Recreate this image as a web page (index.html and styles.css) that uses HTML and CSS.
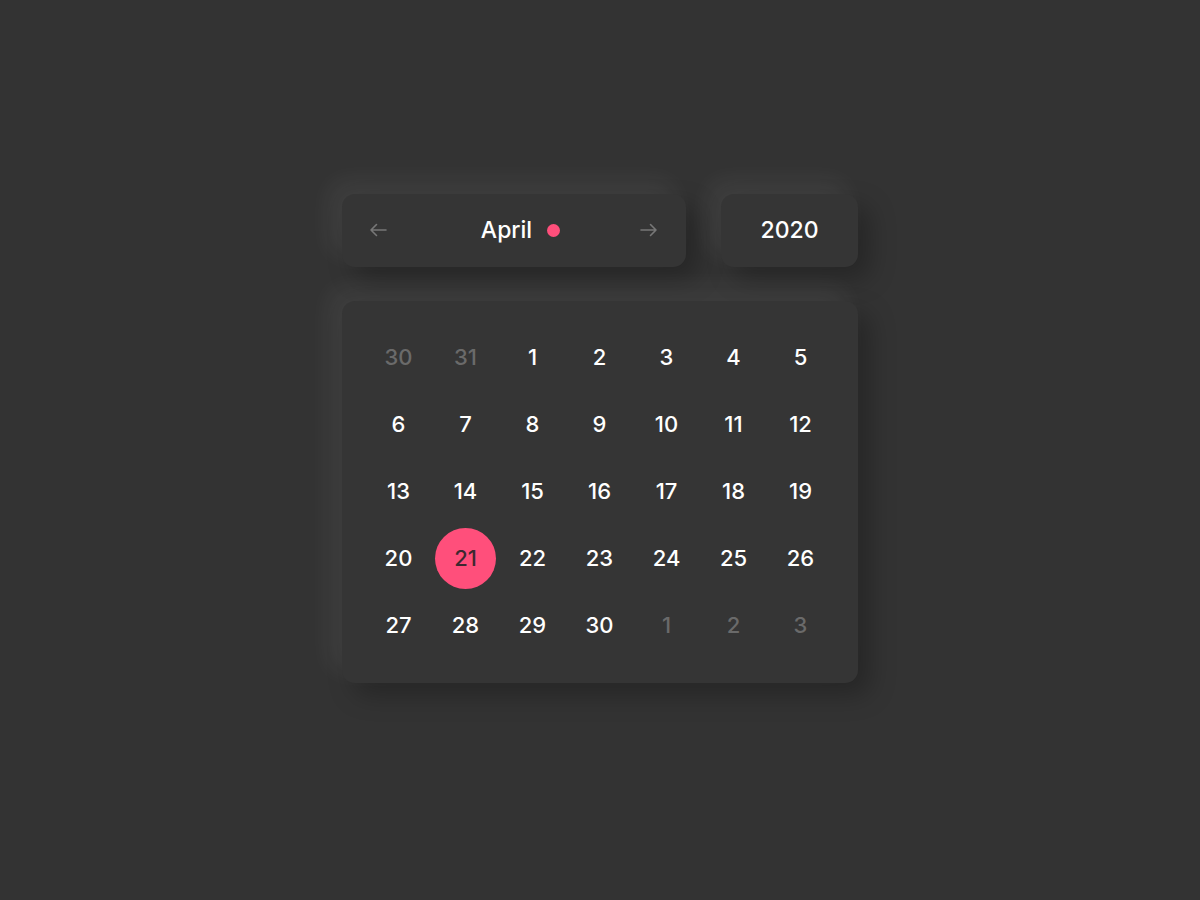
FILE: index.html
```html
<!DOCTYPE html>
<html lang="en">
<head>
<meta charset="utf-8">
<title>Calendar</title>
<link rel="stylesheet" href="styles.css">
</head>
<body>
<div class="picker">
  <div class="top">
    <div class="card month">
      <button class="arrow" aria-label="Previous month">
        <svg width="20" height="14" viewBox="0 0 20 14"><path d="M18 7H3M8.5 1.5L3 7l5.5 5.5" fill="none" stroke="currentColor" stroke-width="1.6" stroke-linecap="round" stroke-linejoin="round"/></svg>
      </button>
      <div class="title"><span>April</span><span class="dot"></span></div>
      <button class="arrow" aria-label="Next month">
        <svg width="20" height="14" viewBox="0 0 20 14"><path d="M2 7h15M11.5 1.5L17 7l-5.5 5.5" fill="none" stroke="currentColor" stroke-width="1.6" stroke-linecap="round" stroke-linejoin="round"/></svg>
      </button>
    </div>
    <div class="card year">2020</div>
  </div>
  <div class="card days">
    <span class="day muted">30</span><span class="day muted">31</span><span class="day">1</span><span class="day">2</span><span class="day">3</span><span class="day">4</span><span class="day">5</span>
    <span class="day">6</span><span class="day">7</span><span class="day">8</span><span class="day">9</span><span class="day">10</span><span class="day">11</span><span class="day">12</span>
    <span class="day">13</span><span class="day">14</span><span class="day">15</span><span class="day">16</span><span class="day">17</span><span class="day">18</span><span class="day">19</span>
    <span class="day">20</span><span class="day selected"><span class="ring">21</span></span><span class="day">22</span><span class="day">23</span><span class="day">24</span><span class="day">25</span><span class="day">26</span>
    <span class="day">27</span><span class="day">28</span><span class="day">29</span><span class="day">30</span><span class="day muted">1</span><span class="day muted">2</span><span class="day muted">3</span>
  </div>
</div>
</body>
</html>
```

FILE: styles.css
```css
html, body {
  margin: 0;
  padding: 0;
  background: #333333;
  height: 100%;
}

body {
  font-family: "Inter", "Noto Sans", sans-serif;
  font-weight: 500;
  color: #ffffff;
}

.picker {
  width: 516px;
  margin: 194px auto 0;
  display: flex;
  flex-direction: column;
  gap: 34px;
}

.top {
  display: flex;
  gap: 35px;
}

.card {
  background: #353535;
  border-radius: 13px;
  box-shadow: -12px -12px 26px rgba(255, 255, 255, 0.065),
              12px 12px 26px rgba(0, 0, 0, 0.26);
}

.month {
  flex: 0 0 344px;
  height: 73px;
  box-sizing: border-box;
  padding: 0 27px 2px 26px;
  display: flex;
  align-items: center;
  justify-content: space-between;
}

.arrow {
  background: none;
  border: 0;
  padding: 0;
  width: 20px;
  height: 14px;
  color: #777777;
  display: flex;
}

.title {
  display: flex;
  align-items: center;
  gap: 15px;
  margin-left: 14px;
  font-size: 23px;
}

.dot {
  width: 13px;
  height: 13px;
  border-radius: 50%;
  background: #ff4f7b;
  margin-top: 1px;
}

.year {
  flex: 1;
  height: 73px;
  box-sizing: border-box;
  padding-bottom: 2px;
  display: flex;
  align-items: center;
  justify-content: center;
  font-size: 23px;
}

.days {
  box-sizing: border-box;
  padding: 23px 24px 24px 23px;
  display: grid;
  grid-template-columns: repeat(7, 67px);
  grid-auto-rows: 67px;
  font-size: 22px;
}

.day {
  display: flex;
  align-items: center;
  justify-content: center;
  padding-bottom: 1px;
}

.muted {
  color: #6a6a6a;
}

.selected {
  padding-bottom: 0;
}

.ring {
  width: 61px;
  height: 61px;
  border-radius: 50%;
  background: #ff4f7b;
  color: #3d2830;
  display: flex;
  align-items: center;
  justify-content: center;
  padding-bottom: 1px;
  box-sizing: border-box;
}
```
